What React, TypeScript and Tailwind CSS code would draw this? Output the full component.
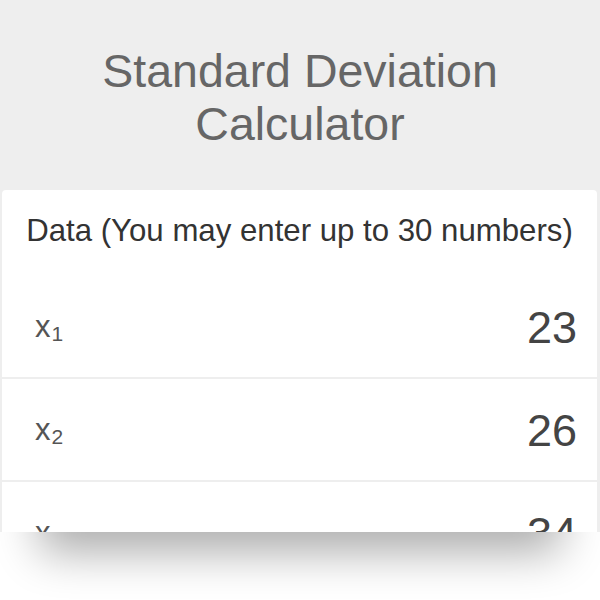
const rows = [
  { label: "1", value: "23" },
  { label: "2", value: "26" },
  { label: "3", value: "34" },
]

const App = () => {
  return (
    <div className="w-[600px] h-[600px] overflow-hidden bg-white font-['Liberation_Sans',Arial,sans-serif]">
      <div className="bg-[#eeeeee]">
        {/* Title */}
        <div className="h-[190px] flex items-center justify-center pt-[6px]">
          <h1 className="text-center text-[46.5px] leading-[53px] text-[#666666] font-normal">
            Standard Deviation
            <br />
            Calculator
          </h1>
        </div>

        {/* Card, clipped at the bottom */}
        <div className="h-[342px] overflow-hidden ml-[2px] mr-[3px] bg-white rounded-t-[4px]">
          <div className="h-[86px] flex items-center justify-center pb-[3px]">
            <p className="text-[31.2px] text-[#333333] whitespace-nowrap">Data (You may enter up to 30 numbers)</p>
          </div>
          {rows.map((row) => (
            <div
              key={row.label}
              className="h-[103px] border-b-2 border-[#eeeeee] flex items-center justify-between pl-[33px] pr-[20px]"
            >
              <span className="text-[31px] text-[#555555] leading-none">
                x<sub className="text-[21px] relative top-[4px] ml-[1px]">{row.label}</sub>
              </span>
              <span className="text-[45px] text-[#444444] leading-none pt-[2px]">{row.value}</span>
            </div>
          ))}
        </div>
      </div>

      {/* Shadow under the clipped card */}
      <div className="relative h-[68px] overflow-hidden bg-white">
        <div className="absolute left-[60px] right-[60px] top-[-30px] h-[30px] shadow-[0_0_45px_20px_rgba(0,0,0,0.33)]" />
      </div>
    </div>
  )
}

export default App
